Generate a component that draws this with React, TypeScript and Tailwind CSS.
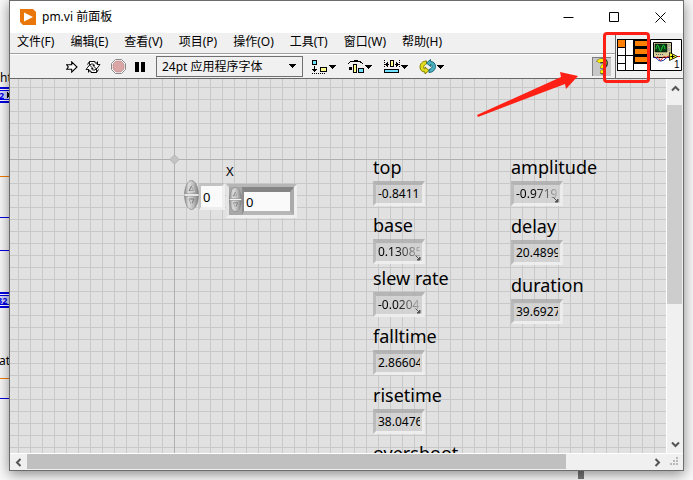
import React from "react";

const menus = ["文件(F)", "编辑(E)", "查看(V)", "项目(P)", "操作(O)", "工具(T)", "窗口(W)", "帮助(H)"];

type Indicator = { id: string; value: string; place: string; fades?: boolean };

const indicators: Indicator[] = [
  { id: "top", value: "-0.8411", place: "left-[363px] top-[77px]" },
  { id: "base", value: "0.13085", place: "left-[363px] top-[135px]", fades: true },
  { id: "slew rate", value: "-0.0204", place: "left-[363px] top-[188px]", fades: true },
  { id: "falltime", value: "2.86604", place: "left-[363px] top-[246px]" },
  { id: "risetime", value: "38.0476", place: "left-[363px] top-[305px]" },
  { id: "overshoot", value: "0.0000", place: "left-[363px] top-[363px]" },
  { id: "amplitude", value: "-0.9719", place: "left-[501px] top-[77px]", fades: true },
  { id: "delay", value: "20.4899", place: "left-[501px] top-[136px]" },
  { id: "duration", value: "39.6927", place: "left-[501px] top-[195px]" },
];

function NumericIndicator({ id, value, place, fades }: Indicator) {
  return (
    <div className={`absolute ${place}`}>
      <label htmlFor={id} className="block h-[25px] text-[18px] leading-[22px] whitespace-nowrap">
        {id}
      </label>
      <div className="relative h-[25px] w-[52px] border-[3px] border-t-4 border-t-[#acacacd0] border-r-[#eeeeeee0] border-b-[#f0f0f0e0] border-l-[#b4b4b4d0] bg-[#cfcfcfd0] bg-clip-padding pl-[2px]">
        <output
          id={id}
          className={`block w-[42px] overflow-hidden text-[12px] leading-[18px] ${
            fades ? "[mask-image:linear-gradient(to_right,black_40%,transparent_110%)]" : ""
          }`}
        >
          {value}
        </output>
        {fades && (
          <svg className="absolute right-px bottom-0" width="6" height="6" viewBox="0 0 6 6">
            <path d="M.5.500 4 4M5 2v3H2z" fill="#555" stroke="#555" />
          </svg>
        )}
      </div>
    </div>
  );
}

function Spinner({ small }: { small?: boolean }) {
  return (
    <svg width={small ? 13 : 15} height={small ? 25 : 30} viewBox="0 0 15 30" preserveAspectRatio="none" className="block shrink-0">
      <defs>
        <linearGradient id={small ? "knobSmall" : "knob"}>
          <stop offset="0" stopColor="#8c8c8c" />
          <stop offset=".3" stopColor="#dedede" />
          <stop offset=".65" stopColor="#b8b8b8" />
          <stop offset="1" stopColor="#808080" />
        </linearGradient>
      </defs>
      <path d="M.5 14C1 6 4 .5 7.5.5S14 6 14.500 14z" fill={small ? "url(#knobSmall)" : "url(#knob)"} stroke="#858585" strokeWidth=".7" />
      <path d="M.5 16C1 24 4 29.500 7.500 29.500S14 24 14.500 16z" fill={small ? "url(#knobSmall)" : "url(#knob)"} stroke="#858585" strokeWidth=".7" />
      <path d="M1 15h13" stroke="#f4f4f4" strokeWidth="1.500" />
      <path d="M5 11 7.500 6 10 11zM5 19l2.500 5L10 19z" fill="#ccc" stroke="#777" />
      <path d="M5 11.500h5.500L8 6M5.500 19 8 24.500" fill="none" stroke="#f2f2f2" strokeWidth=".6" />
    </svg>
  );
}

function Caret() {
  return (
    <svg width="7" height="4" viewBox="0 0 7 4" className="block" shapeRendering="crispEdges">
      <path d="M0 0h7v1H6v1H5v1H4v1H3V3H2V2H1V1H0z" fill="#000" />
    </svg>
  );
}

function ToolIcon({ label, children }: { label: string; children: React.ReactNode }) {
  return (
    <button aria-label={label} className="flex w-9 items-center gap-px">
      <svg width="17" height="16" viewBox="0 0 17 16" shapeRendering="crispEdges">
        {children}
      </svg>
      <Caret />
    </button>
  );
}

function Toolbar() {
  return (
    <div className="flex h-[23px] items-center">
      <button aria-label="运行" className="ml-14">
        <svg width="12" height="12" viewBox="0 0 12 12" className="block">
          <path d="M.7 3.700h5V.9L11 6l-5.300 5.100V8.300h-5L2.300 6z" fill="#fff" stroke="#000" strokeWidth="1.100" />
        </svg>
      </button>
      <button aria-label="连续运行" className="ml-[7px]">
        <svg width="16" height="14" viewBox="0 0 16 14" className="block">
          <path d="M4.500 1.500H10L12.500 4V1.500M4.500 1.500 2.500 4.500" fill="none" stroke="#000" />
          <path d="M4.500 1.500H9l3 3H15L11.500 9 8 5.500h1.500L8.500 4H6L4.500 5.500z" fill="#fff" stroke="#000" strokeWidth=".9" />
          <path d="M11.500 12.500H7l-3-3H1L4.500 5 8 8.500H6.500L7.500 10H10l1.500-1.500z" fill="#fff" stroke="#000" strokeWidth=".9" />
          <path d="M11.500 12.500l2-3M11.500 12.500H6L3.500 10v2.500" fill="none" stroke="#000" />
        </svg>
      </button>
      <button aria-label="中止" className="ml-2.5">
        <svg width="15" height="15" viewBox="0 0 15 15" className="block">
          <path d="M4.500.5h6l4 4v6l-4 4h-6l-4-4v-6z" fill="#fff" stroke="#888" />
          <path d="M5 2h5l3 3v5l-3 3H5l-3-3V5z" fill="#d9a5a5" stroke="#bc8e8e" strokeWidth=".7" />
        </svg>
      </button>
      <button aria-label="暂停" className="ml-[9px] flex h-[10px] w-[10px] justify-between">
        <span className="h-full w-1 bg-black" />
        <span className="h-full w-1 bg-black" />
      </button>
      <div className="relative ml-[11px] h-[21px] w-[147px]">
        <select
          aria-label="字体"
          className="block h-full w-full appearance-none rounded-none border border-[#707070] bg-[#f0f0f0] pl-[5px] text-[12px] leading-[18px] outline-none"
        >
          <option>24pt 应用程序字体</option>
        </select>
        <span className="pointer-events-none absolute top-2 right-[7px]">
          <Caret />
        </span>
      </div>
      <div className="ml-2 flex">
        <ToolIcon label="对齐对象">
          <path d="M1.500 1.500h4v4h-4z" fill="#70e0ff" stroke="#000" />
          <path d="M9.500 8.500h6v4h-6z" fill="#ffff90" stroke="#000" />
          <path d="M3 7h1v3h2v1H5v1H4v1H3v-1H2v-1H1v-1h2z" fill="#000" />
          <path d="M1 14.500h14" stroke="#000" strokeDasharray="1 1" />
        </ToolIcon>
        <ToolIcon label="分布对象">
          <path d="M1 4h1V3h1V2h4V1h4v1h3v1h1v1h1v1h-1V4h-2V3H3v1H2v1H1zM2 8h3v3H2z" fill="#000" />
          <path d="M6.500 5.500h3v8h-3z" fill="#ffff90" stroke="#000" />
          <path d="M11.500 9.500h5v4h-5z" fill="#70e0ff" stroke="#000" />
        </ToolIcon>
        <ToolIcon label="调整对象大小">
          <path d="M7.500 1.500h3v6h-3z" fill="#ffff90" stroke="#000" />
          <path d="M2 5h1V4h1V3h1v2h1v1H5v2H4V7H3V6H2zM16 5h-1V4h-1V3h-1v2h-1v1h1v2h1V7h1V6h1z" fill="#000" />
          <path d="M1.500 1v8M16.500 1v8" stroke="#000" strokeDasharray="1 1" />
          <path d="M1.500 10.500h14v3h-14z" fill="#70e0ff" stroke="#000" />
        </ToolIcon>
        <ToolIcon label="重新排序">
          <g shapeRendering="geometricPrecision">
            <path d="M7.500 2C3 2 1 5 1 8s2 5 5 5v2l4-3.500L6 8v2C4 10 4 6 7.500 5z" fill="#e0dc20" stroke="#858000" />
            <path d="M10 13.500c4 0 6.500-3 6.500-6s-2-5-5-5v-2L7.500 4 11.500 7.500v-2c2 0 2.500 4-1.500 5z" fill="#4cb0c0" stroke="#1c6878" />
          </g>
        </ToolIcon>
      </div>
      <button aria-label="即时帮助" className="mr-1 ml-auto h-[19px] w-[19px] border-t border-l border-[#808080] bg-[#c8c8c8]">
        <svg width="18" height="18" viewBox="0 0 18 18" className="block">
          <path d="M5.500 4.500C6.500 2.500 12.500 1.500 12.500 5.500c0 2.500-3 2.500-3 5" fill="none" stroke="#333" strokeWidth="5" />
          <circle cx="9.500" cy="14" r="2.500" fill="#333" />
          <path d="M5 4C6.500 2 12 1.500 12 5c0 2.500-3 2.500-3 5" fill="none" stroke="#fff000" strokeWidth="3.200" />
          <circle cx="9" cy="13.700" r="1.800" fill="#fff000" />
        </svg>
      </button>
    </div>
  );
}

function ConnectorPane() {
  return (
    <svg width="33" height="32" viewBox="0 0 33 32" shapeRendering="crispEdges" className="block">
      <path d="M0 0h33v32H0z" fill="#000" />
      <path d="M1 9h7v7H1zM1 17h7v7H1zM1 25h7v6H1zM9 1h7v15H9zM9 17h7v14H9zM17 25h15v6H17z" fill="#fff" />
      <path d="M1 1h7v7H1zM18 2h14v5H18zM18 10h14v5H18zM18 18h14v5H18z" fill="#ff8000" />
    </svg>
  );
}

function ViIcon() {
  return (
    <svg width="32" height="32" viewBox="0 0 32 32" className="block">
      <path d="M.5.500h31v31H.5z" fill="#fff" stroke="#000" />
      <path d="M3.500 3.500h18v15h-18z" fill="#d8cf9c" stroke="#000" />
      <path d="M5 5h12v8H5z" fill="#063c16" stroke="#000" strokeWidth=".5" />
      <path d="M6 10c1-5 2-5 3-1s2 4 3 0 2-4 3 1" fill="none" stroke="#20d838" />
      <circle cx="19" cy="6.500" r="1" fill="#fff" stroke="#555" strokeWidth=".6" />
      <circle cx="19" cy="10.500" r="1" fill="#fff" stroke="#555" strokeWidth=".6" />
      <path d="M6 15.500h7" stroke="#555" strokeDasharray="1 1" />
      <path d="M4 18c4 1 3 4 7 4s4-4 8-4" fill="none" stroke="#1420a0" />
      <path d="M6 19c3-4 3 4 5 2s2-4 4-3 2-1 5-1M27 17.500h3" fill="none" stroke="#e01818" />
      <path d="M19.500 13.500v8l8-4z" fill="#ffff20" stroke="#000" strokeWidth=".8" />
      <path d="M20.500 17.500h4M22.500 15.500v4" stroke="#000" />
      <text x="24" y="29" fontSize="10" className="font-['Liberation_Sans',sans-serif]">1</text>
    </svg>
  );
}

function Chevron({ d }: { d: string }) {
  return (
    <svg width="9" height="9" viewBox="0 0 9 9" className="block">
      <path d={d} fill="none" stroke="#555" strokeWidth="2" />
    </svg>
  );
}

function FrontPanel() {
  return (
    <main
      className="relative min-w-0 flex-1 overflow-hidden border-r border-white bg-[#e1e1e1] bg-[linear-gradient(to_right,#c8c8c8_1px,transparent_1px),linear-gradient(to_bottom,#c8c8c8_1px,transparent_1px)] bg-[size:12px_12px] bg-[position:8px_8px]"
    >
      <div className="absolute top-0 left-[164px] h-full w-px bg-[#b0b0b0]" />
      <div className="absolute top-20 left-0 h-px w-full bg-[#b0b0b0]" />
      <svg className="absolute top-[75px] left-[159px]" width="11" height="11" viewBox="0 0 11 11">
        <path d="M5.500 1 10 5.500 5.500 10 1 5.500z" fill="#c4c4c4" stroke="#b0b0b0" />
      </svg>

      <div className="absolute top-[101px] left-[174px] flex">
        <Spinner />
        <div className="mt-[3px] h-[27px] w-[26px] border-[3px] border-l-2 border-t-[#bbbbbbd0] border-r-[#eeeeee] border-b-[#eeeeee] border-l-[#c4c4c4]">
          <input aria-label="索引" defaultValue="0" className="block h-[21px] w-[21px] bg-[#fafafa] pl-[2px] text-[13px] leading-[18px] outline-none" />
        </div>
      </div>

      <div className="absolute top-[81px] left-[216px]">
        <label htmlFor="x-value" className="block h-6 text-[13px] leading-[22px]">X</label>
        <div className="flex h-[34px] w-[71px] border-[3px] border-t-[#b6b6b6] border-r-[#eeeeee] border-b-[#f0f0f0] border-l-[#e4e4e4] bg-[#a8a8a8]">
          <Spinner small />
          <div className="h-7 flex-1 border-t-[5px] border-r-4 border-b-4 border-l-2 border-t-[#858585] border-r-[#aaaaaa] border-b-[#b6b6b6] border-l-[#8c8c8c]">
            <input id="x-value" defaultValue="0" className="block h-[19px] w-full bg-[#fafafa] pl-[2px] text-[13px] leading-[18px] outline-none" />
          </div>
        </div>
      </div>

      {indicators.map((item) => (
        <NumericIndicator key={item.id} {...item} />
      ))}
    </main>
  );
}

function PanelWindow() {
  return (
    <div className="relative flex min-w-0 flex-1 flex-col border border-[#6c6c6c] bg-[#f0f0f0] shadow-[0_3px_12px_rgba(0,0,0,0.45)]">
      <header className="flex h-8 shrink-0 items-center bg-white pl-2.5">
        <svg width="16" height="16" viewBox="0 0 16 16">
          <path d="M0 0h13l3 3v13H3l-3-3z" fill="#e8760b" />
          <path d="M4 3.500 13 8l-9 4.500z" fill="#fff" />
        </svg>
        <h1 className="ml-1.5 text-[12px] leading-4">pm.vi 前面板</h1>
        <div className="ml-auto flex">
          <button aria-label="最小化" className="grid h-8 w-[46px] place-items-center">
            <svg width="11" height="11" viewBox="0 0 11 11"><path d="M.5 5.500h10" stroke="#000" /></svg>
          </button>
          <button aria-label="最大化" className="grid h-8 w-[46px] place-items-center">
            <svg width="11" height="11" viewBox="0 0 11 11"><path d="M.5.500h9v9h-9z" fill="none" stroke="#000" /></svg>
          </button>
          <button aria-label="关闭" className="grid h-8 w-[46px] place-items-center">
            <svg width="11" height="11" viewBox="0 0 11 11"><path d="m.5.500 10 10m0-10-10 10" stroke="#000" /></svg>
          </button>
        </div>
      </header>

      <div className="flex shrink-0 border-b border-[#696969]">
        <div className="min-w-0 flex-1">
          <nav className="flex h-[21px] gap-4 border-b border-[#a0a0a0] pl-[7px] text-[12px] leading-[18px]">
            {menus.map((menu) => (
              <button key={menu} className="h-[18px] whitespace-nowrap">{menu}</button>
            ))}
          </nav>
          <div className="border-t border-white">
            <Toolbar />
          </div>
        </div>
        <div className="flex w-[68px] items-start border-l border-[#696969] pt-1.5 pl-px">
          <ConnectorPane />
          <ViIcon />
        </div>
      </div>

      <div className="flex min-h-0 flex-1">
        <FrontPanel />
        <div className="flex w-4 shrink-0 flex-col">
          <button aria-label="向上滚动" className="grid h-[26px] shrink-0 place-items-center pb-2">
            <Chevron d="M1 6.500 4.500 3 8 6.500" />
          </button>
          <div className="flex-1">
            <div className="h-3/5 w-[15px] bg-[#cdcdcd]" />
          </div>
          <button aria-label="向下滚动" className="grid h-[17px] shrink-0 place-items-center">
            <Chevron d="M1 2.500 4.500 6 8 2.500" />
          </button>
        </div>
      </div>

      <div className="flex h-[17px] shrink-0 border-t border-white">
        <button aria-label="向左滚动" className="grid w-[17px] place-items-center">
          <Chevron d="M6.500 1 3 4.500 6.500 8" />
        </button>
        <div className="flex min-w-0 flex-1">
          <div className="h-[15px] grow-[13] bg-[#c0c0c0]" />
          <div className="grow-2" />
        </div>
        <button aria-label="向右滚动" className="grid w-[17px] place-items-center">
          <Chevron d="M2.500 1 6 4.500 2.500 8" />
        </button>
        <div className="flex w-[17px] items-end justify-center pb-1">
          <svg width="9" height="9" viewBox="0 0 9 9">
            <path d="M6 0h2v2H6zM3 3h2v2H3zM6 3h2v2H6zM0 6h2v2H0zM3 6h2v2H3zM6 6h2v2H6z" fill="#b8b8b8" />
          </svg>
        </div>
      </div>

      <div className="pointer-events-none absolute top-[31px] right-[33px] h-[51px] w-[47px] rounded-[4px] border-[3px] border-[#ff2015]" />
      <svg className="pointer-events-none absolute top-[70px] right-[102px]" width="104" height="48" viewBox="0 0 104 48">
        <path d="M0 44 84 6 83 1l18 4-12 13-1-5L1 46z" fill="#ff2015" />
      </svg>
    </div>
  );
}

/* Block diagram wires that show beside the panel window. */
function DiagramEdge() {
  return (
    <svg className="absolute top-0 left-0" width="10" height="480" viewBox="0 0 10 480" shapeRendering="crispEdges">
      <path d="M0 176.500h10M0 378.500h10" stroke="#f57d00" />
      <path d="M0 217.500h10M0 250.500h10M0 398.500h10" stroke="#0000e8" />
      <path d="M0 87h10v16H0zM0 292h10v16H0z" fill="#0000e8" />
      <path d="M0 89h10v1H0zM0 100h10v1H0zM0 294h10v1H0zM0 305h10v1H0z" fill="#fff" />
      <path d="M0 91h10v8H0zM0 296h10v8H0z" fill="#d4d4ff" />
      <path d="m7 92 3 3-3 3z" fill="#000" />
      <g shapeRendering="auto">
        <text x="-1" y="99" fontSize="9" fontWeight="700" fill="#0000e8">2</text>
        <text x="-3" y="304" fontSize="9" fontWeight="700" fill="#0000e8">32</text>
        <text x="0" y="82" fontSize="12">ht</text>
        <text x="-1" y="365" fontSize="12">at</text>
      </g>
    </svg>
  );
}

export default function App() {
  return (
    <div className="relative flex h-screen overflow-hidden bg-[#f8f8f8] pr-[9px] pb-[9px] pl-[9px] font-['Noto_Sans','Noto_Sans_CJK_SC',sans-serif] text-black">
      <DiagramEdge />
      <div className="absolute right-[109px] bottom-[1px] h-3 w-1.5 bg-[#777]" />
      <PanelWindow />
    </div>
  );
}
